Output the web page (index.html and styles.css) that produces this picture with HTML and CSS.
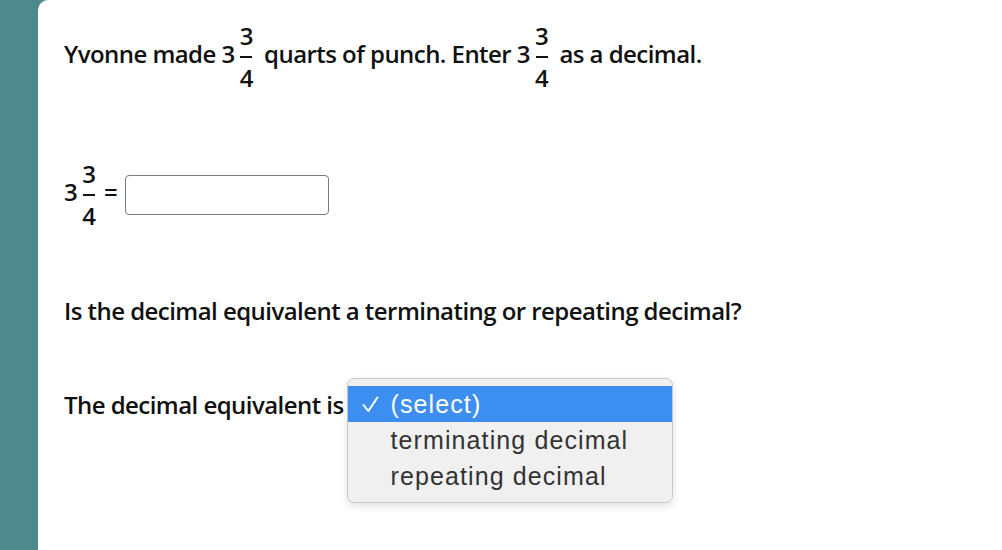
FILE: index.html
```html
<!DOCTYPE html>
<html lang="en">
<head>
<meta charset="utf-8">
<title>Decimal question</title>
<link rel="stylesheet" href="styles.css">
</head>
<body>
<div class="main">
  <p class="line first">Yvonne made 3<span class="frac"><span class="num">3</span><span class="bar"></span><span class="den">4</span></span> quarts of punch. Enter 3<span class="frac"><span class="num">3</span><span class="bar"></span><span class="den">4</span></span> as a decimal.</p>

  <p class="line answer-row">3<span class="frac tight"><span class="num">3</span><span class="bar"></span><span class="den">4</span></span><span class="eq">=</span><input class="box" type="text" aria-label="answer"></p>

  <p class="line question">Is the decimal equivalent a terminating or repeating decimal?</p>

  <div class="line select-row">The decimal equivalent is<span class="select-wrap"><span class="menu" role="listbox">
        <span class="opt selected" role="option"><svg class="check" width="17" height="17" viewBox="0 0 17 17" aria-hidden="true"><polyline points="1.5,9 6.3,15 15.5,1.5" fill="none" stroke="#fff" stroke-width="2" stroke-linecap="round" stroke-linejoin="round"/></svg>(select)</span>
        <span class="opt" role="option">terminating decimal</span>
        <span class="opt" role="option">repeating decimal</span>
      </span></span></div>
</div>
</body>
</html>
```

FILE: styles.css
```css
html, body {
  margin: 0;
  height: 100%;
}
body {
  background: #4e8a8c;
  font-family: "Open Sans", "DejaVu Sans", sans-serif;
  font-weight: 600;
  color: #111;
  overflow: hidden;
}
.main {
  margin-left: 38px;
  height: 100%;
  background: #fff;
  border-top-left-radius: 10px;
  padding: 24px 0 0 26px;
  box-sizing: border-box;
}
.line {
  margin: 0;
  font-size: 24px;
  line-height: 32px;
  letter-spacing: -0.55px;
  white-space: nowrap;
}
.frac {
  display: inline-flex;
  flex-direction: column;
  align-items: center;
  vertical-align: middle;
  margin: 0 5px 0 5px;
}
.num, .den {
  line-height: 24px;
  letter-spacing: 0;
}
.bar {
  width: 12px;
  height: 2px;
  background: #111;
  margin: 8px 0;
}
.frac.tight {
  margin: 0 0 0 5px;
}
.answer-row {
  margin-top: 72px;
}
.eq {
  margin-left: 8px;
}
.box {
  width: 204px;
  height: 40px;
  box-sizing: border-box;
  border: 1.5px solid #7a7a7a;
  border-radius: 4px;
  margin: 0 0 0 8px;
  padding: 0;
  vertical-align: middle;
}
.question {
  margin-top: 67px;
}
.select-row {
  margin-top: 62px;
}
.select-wrap {
  position: relative;
  display: inline-block;
  width: 0;
  height: 0;
}
.menu {
  position: absolute;
  left: 3px;
  top: -36px;
  width: 326px;
  box-sizing: border-box;
  display: flex;
  flex-direction: column;
  padding: 7px 0 8px;
  background: #f0f0f0;
  border: 1px solid #c9c9c9;
  border-radius: 7px;
  box-shadow: 0 3px 8px rgba(0,0,0,0.12);
  font-family: "Liberation Sans", Arial, sans-serif;
  font-weight: 400;
  font-size: 25px;
  line-height: 36px;
  letter-spacing: 1.1px;
  color: #333;
}
.opt {
  display: block;
  height: 36px;
  padding-left: 43px;
  position: relative;
}
.opt.selected {
  background: #3c8ff0;
  color: #fff;
}
.check {
  position: absolute;
  left: 14px;
  top: 10px;
}
```
